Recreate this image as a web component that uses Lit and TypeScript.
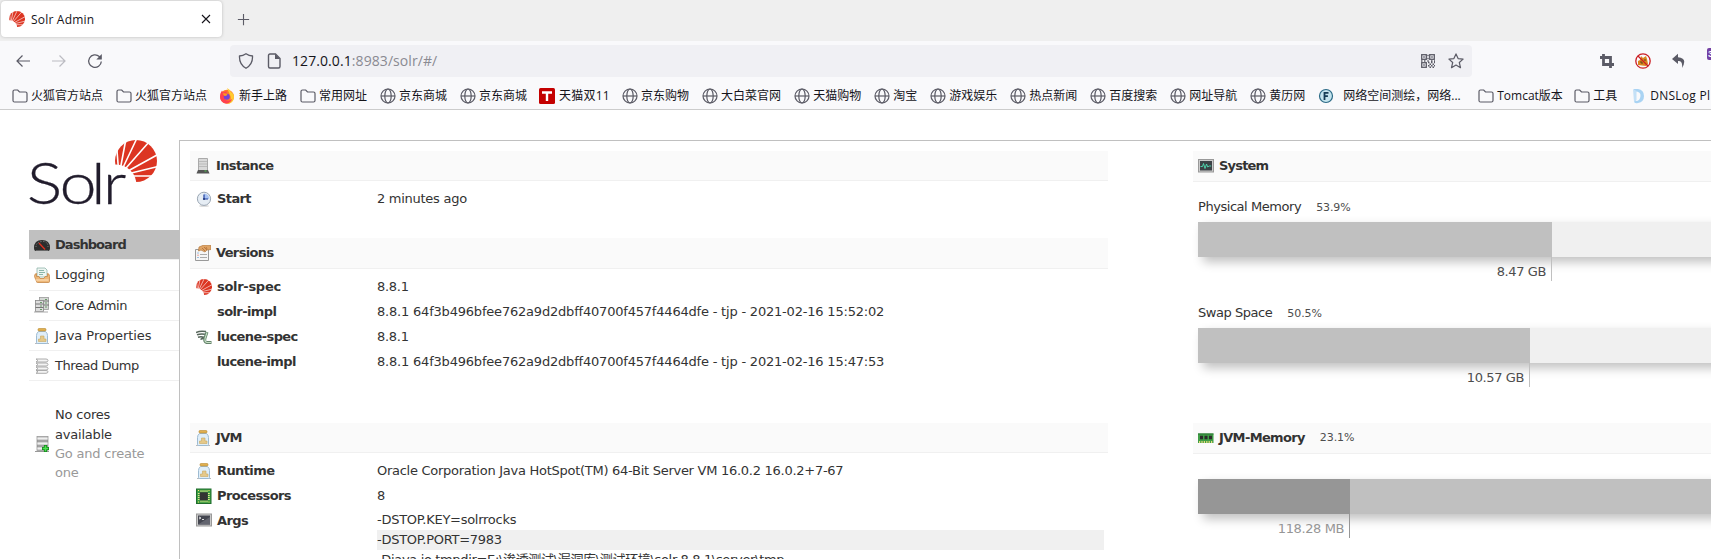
import { LitElement, html, css, svg, nothing } from "lit";
import { customElement, property } from "lit/decorators.js";

const fan = svg`
  <circle cx="21" cy="21" r="21" fill="#dc3522"/>
  <circle cx="1" cy="45" r="20.500" fill="#fff"/>
  <path d="M4 36 L1 -2 M4 36 L11.500 -4 M4 36 L22.500 -3 M4 36 L34 2 M4 36 L42 15 M4 36 L45 26 M4 36 L38 36" stroke="#fff" stroke-width="1.600"/>`;

const jar = svg`
  <path d="M1 15.500h14" stroke="#bbb"/>
  <path d="M4.500 3.500h7q2 1.500 2 4v7q0 1-1 1h-9q-1 0-1-1v-7q0-2.500 2-4z" fill="#dfeef9" stroke="#9dbbd2"/>
  <rect x="4" y="0.500" width="8" height="2.500" rx="1" fill="#e0b050" stroke="#b98a30" stroke-width=".6"/>
  <path d="M4.500 13.500v-2.500h2v-3h3.500v3h2v2.500z" fill="#e5c98a" stroke="#c9a860" stroke-width=".6"/>`;

const rack = svg`
  <rect x="3" y="0.500" width="11" height="14" fill="#c9c9c9" stroke="#999" stroke-width=".8"/>
  <path d="M3 5h11M3 10h11" stroke="#777" stroke-width=".9"/>
  <path d="M3.500 2.500h10M3.500 7.500h10M3.500 12.500h10" stroke="#efefef" stroke-width="1.500"/>
  <path d="M1 15.500h14" stroke="#999"/>`;

const icons: Record<string, unknown> = {
  fan: svg`<g transform="scale(.381)">${fan}</g>`,
  jar,
  folder: svg`<path d="M1 3.500q0-1.500 1.500-1.500h3.200l1.800 2h6q1.500 0 1.500 1.500v7q0 1.500-1.500 1.500h-11q-1.500 0-1.500-1.500z" fill="none" stroke="#5b5b66" stroke-width="1.200"/>`,
  globe: svg`<g fill="none" stroke="#5b5b66" stroke-width="1.200"><circle cx="8" cy="8" r="7"/><ellipse cx="8" cy="8" rx="3.200" ry="7"/><path d="M1 8h14"/></g>`,
  firefox: svg`<circle cx="8" cy="8.800" r="7" fill="#ff7a2b"/><path d="M8 0q3 1.500 4 4q3 1.500 3 5a7 7 0 0 1-7 7q6-4 3-9z" fill="#ffcb2e"/><path d="M1 8.500q0-3.500 2-6l1 2q2-1.500 4-1l-1 2 2 1-3 5q4 3 7.500-1-2 5-6.500 5-6-1-6-7z" fill="#ff4050"/><circle cx="7.800" cy="8.800" r="3" fill="#7542d8"/><path d="M3.500 5.500q3-1 5 1-1 1.500-3 1.500z" fill="#ff9a1e"/>`,
  tmall: svg`<rect width="16" height="16" rx="1.500" fill="#c40000"/><path d="M3 4.500h10M8 4.500v8.500" stroke="#fff" stroke-width="2.400"/>`,
  fofa: svg`<circle cx="8" cy="8" r="6.500" fill="#c4e4ee" stroke="#2b6a86" stroke-width="1.200"/><path d="M6.500 12V4.800h4M6.500 8.200h3.400" fill="none" stroke="#153c55" stroke-width="1.800"/>`,
  dns: svg`<path d="M3 1h4q6 1 6 7t-6 7q-4 1-4-2l1-3 1 3q4 0 4.500-5T3 3.500z" fill="#a9d3f3"/><path d="M2 1l3.500 2v9L3 14z" fill="#c4e0f6"/>`,
  dashboard: svg`<path d="M0 11q0-8 8-8t8 8q0 3-2 3H2q-2 0-2-3z" fill="#2d2d2d"/><path d="M2 10q0-5 6-5.500t6 5.500" fill="none" stroke="#888" stroke-dasharray="1 1.500"/><path d="M5 6l6 6.500" stroke="#e03020" stroke-width="1.300"/><path d="M2 13.500h12" stroke="#777" stroke-width=".8"/>`,
  logging: svg`<path d="M3 1h8l2 2v7H3z" fill="#eef6f2" stroke="#8fb5ab" stroke-width=".8"/><path d="M5 3.500h5M5 5.500h6M5 7.500h4" stroke="#7eafa2" stroke-width=".9"/><path d="M.5 9.500q0-3 2-3v3h2.500l1 2h4l1-2h2.500v-3q2 0 2 3v5q0 1-1 1h-11q-1 0-1-1z" fill="#eeb878" stroke="#c58747" stroke-width=".8"/><path d="M1.500 13h13" stroke="#ffe4c2"/>`,
  cores: svg`<rect x="5.500" y=".5" width="9" height="12" fill="#d4d8d4" stroke="#999" stroke-width=".8"/><path d="M5 4h10M5 8h10" stroke="#777"/><rect x="1.500" y="3.500" width="8" height="11" fill="#ddd" stroke="#888" stroke-width=".8"/><path d="M1.500 7h8M1.500 10.500h8" stroke="#777"/><path d="M6 5.500h2M6 9h2M6 12.500h2M11 2.500h2M11 6h2M11 10h2" stroke="#6a9a6a"/><path d="M0 15h14" stroke="#aaa"/>`,
  threads: svg`<g fill="#f4f4f4" stroke="#a4a4a4" stroke-width=".9"><path d="M2 1h10q2 0 2 1.500T12 4H2l2-1.500z"/><path d="M2 5h10q2 0 2 1.500T12 8H2l2-1.500z"/><path d="M2 9h10q2 0 2 1.500T12 12H2l2-1.500z"/><path d="M2 12.500h10q2 0 2 1.300t-2 1.500H2l2-1.500z"/></g>`,
  coreadd: svg`${rack}<path d="M11.500 9v7M8 12.500h7" stroke="#138a1c" stroke-width="3.200"/><path d="M11.500 9.800v5.400M8.800 12.500h5.400" stroke="#4fe052" stroke-width="1.500"/>`,
  server: svg`<path d="M3.500 .5h9v12h-9z" fill="#d9d9d9" stroke="#aaa"/><path d="M4 3.500h8M4 6h8M4 8.500h8" stroke="#b4b4b4" stroke-width=".8"/><path d="M3 12h10l1.500 3.500h-13z" fill="#555"/><path d="M9.500 13h2" stroke="#5c5"/>`,
  clock: svg`<ellipse cx="8" cy="15" rx="5" ry="1" fill="#ddd"/><circle cx="8" cy="7.800" r="6.600" fill="#e6edf4" stroke="#9aa6b3"/><path d="M8 8V2.500a5.500 5.500 0 0 1 5.300 5.500z" fill="#a9c3f3"/><path d="M8 3.500v4.500h4" fill="none" stroke="#2242a0" stroke-width="1.200"/><circle cx="8" cy="8" r="1.100" fill="#223a80"/>`,
  versions: svg`<path d="M.5 4.500h13v11H.5z" fill="#f5f5f5" stroke="#999"/><path d="M5 9.500h7M5 12.500h7" stroke="#aaa"/><path d="M2.500 8h1M2.500 12.500h1" stroke="#48c"/><path d="M2.500 10.200h1" stroke="#d54"/><path d="M4 2l5-2 7 .5v4l-4 .5-2 2-4-2-2.500 1z" fill="#dfa466" stroke="#b47a3f" stroke-width=".7"/><path d="M7 3l3 3M9 2l3 3M11 2l1 2" stroke="#a9662f" stroke-width=".7"/>`,
  lucene: svg`<path d="M0 3.500q4-2 10-1M1 5.800q4-1.500 8-.5M2 8.200q3-1 6 0M4.500 10.500q2-1.500 4-1" fill="none" stroke="#56655a" stroke-width="1.500"/><path d="M11 3l-2 6q-1 4 1.500 4.500h5" fill="none" stroke="#65846b" stroke-width="3"/><path d="M11 3.500l-2 6q-.5 3.500 2 4h4" fill="none" stroke="#c6dec5" stroke-width="1.100"/>`,
  cpu: svg`<rect x=".5" y="1" width="14.500" height="14.500" fill="#3a9e42" stroke="#1f6d2c"/><path d="M4.500 3.200h7M4.500 13.300h7M2.800 5v7M12.800 5v7" stroke="#e3e48c" stroke-width="1.800" stroke-dasharray="1 1"/><rect x="3.800" y="4.300" width="8" height="8" fill="#333"/><path d="M2 2.500h1M12.500 2.500h1M2 14h1M12.500 14h1" stroke="#ffe26b"/>`,
  terminal: svg`<rect x=".5" y="2" width="15" height="12" fill="#c9c9c9" stroke="#999"/><rect x="2" y="3.500" width="12" height="9" fill="#444650"/><path d="M3 5l2 1-2 1M6 7.500h2" fill="none" stroke="#eee" stroke-width=".9"/><path d="M2 12.500L14 5v7.500z" fill="#63656f"/>`,
  system: svg`<rect x=".5" y="1.500" width="15" height="12.500" fill="#ccc" stroke="#999"/><rect x="2" y="3" width="12" height="9.500" fill="#3c4246"/><path d="M2.500 8.500h2l1-3 1.500 5 1.500-4.500 1.200 3 1.500-1h2" fill="none" stroke="#4fe0b4" stroke-width=".9"/>`,
  ram: svg`<rect y="3.500" width="15.500" height="9.500" fill="#3f9e46"/><path d="M0 4h15.500" stroke="#2b7432"/><path d="M2 7.500h3M6.500 7.500h3M11 7.500h3" stroke="#2b2b2b" stroke-width="3.500"/><path d="M1 12h14" stroke="#e8dc7c" stroke-width="2" stroke-dasharray="1.200 1.200"/>`,
  back: svg`<path d="M7.500 2.500L2 8l5.500 5.500M2 8h13" fill="none" stroke="#5b5b66" stroke-width="1.200"/>`,
  forward: svg`<path d="M8.500 2.500L14 8l-5.500 5.500M14 8H1" fill="none" stroke="#bcbcc2" stroke-width="1.200"/>`,
  reload: svg`<path d="M14.300 8.500a6.300 6.300 0 1 1-2-5l1.500 1.500" fill="none" stroke="#5b5b66" stroke-width="1.300"/><path d="M14.800 1v5.500H9.300z" fill="#5b5b66"/>`,
  shield: svg`<path d="M8 .8q3 2 6.500 2.200Q15 11.500 8 15.300 1 11.500 1.500 3 5 2.800 8 .8z" fill="none" stroke="#5b5b66" stroke-width="1.300"/>`,
  page: svg`<path d="M2.500 2.500q0-1.500 1.500-1.500h5.500L14 5.500v8q0 1.500-1.500 1.500H4q-1.500 0-1.500-1.500z" fill="none" stroke="#5b5b66" stroke-width="1.400"/><path d="M9 1v5h5z" fill="#5b5b66"/>`,
  qr: svg`<g fill="none" stroke="#5b5b66" stroke-width="1.300"><rect x="1.700" y="1.700" width="4.600" height="4.600"/><rect x="9.700" y="1.700" width="4.600" height="4.600"/><rect x="1.700" y="9.700" width="4.600" height="4.600"/></g><path d="M3.300 4h1.400M11.300 4h1.400M3.300 12h1.400M7.300 8h1.400M1 8h1.500M4 8h1.500M11 8h1.500M14 8h1M8 9.600h1.500M11 9.600h1.500M14 9.600h1M9.500 11.200h1.500M12.500 11.200h1.500M8 12.800h1.500M11 12.800h1.500M14 12.800h1M9.500 14.300h1.500M12.500 14.300h1.500M7.300 2.500h1.400M7.300 5.500h1.400" stroke="#5b5b66" stroke-width="1.500"/>`,
  star: svg`<path d="M8 .9l2.100 4.700 5 .5-3.800 3.400 1.200 5.200L8 12l-4.500 2.700 1.200-5.200L.9 6.100l5-.5z" fill="none" stroke="#5b5b66" stroke-width="1.200" stroke-linejoin="round"/>`,
  crop: svg`<path d="M4.500 1v10.500H15M1 4.500h10.500V15" fill="none" stroke="#5b5b66" stroke-width="2.800"/>`,
  blocked: svg`<path d="M3 12V8l2-1 1-4 2 2 3-2 1 3 1 5-2 2z" fill="#d9861d"/><path d="M5 9h2v2M9 7h2" stroke="#5f4420" fill="none"/><circle cx="8" cy="8" r="7.200" fill="none" stroke="#cb1f24" stroke-width="1.300"/><path d="M3 3l10 10" stroke="#cb1f24" stroke-width="1.300"/>`,
  reply: svg`<path d="M7 .8L1 6l6 5V8q5-.5 4 7Q17 5 7 4.200z" fill="#5b5b66"/>`,
  close: svg`<path d="M4 4l8 8M12 4l-8 8" stroke="#15141a" stroke-width="1.100"/>`,
  plus: svg`<path d="M8 2v12M2 8h12" stroke="#5b5b66" stroke-width="1.200"/>`,
};

const icon = (name: string, size = 16) =>
  html`<svg width=${size} height=${size} viewBox="0 0 16 16">${icons[name] ?? nothing}</svg>`;

const base = css`
  :host { display: block; box-sizing: border-box; }
  * { box-sizing: border-box; }
  svg { display: block; flex: none; }
`;

@customElement("browser-chrome")
class BrowserChrome extends LitElement {
  static styles = [base, css`
    :host { font-family: "Open Sans", "Noto Sans CJK SC", sans-serif; font-size: 12px; letter-spacing: 0; color: #15141a; overflow: hidden; }
    .tabs { height: 41px; background: #efefef; display: flex; }
    .tab { width: 221px; height: 36px; margin: 1px 0 0 1px; padding: 0 8px; background: #fff; border-radius: 4px; box-shadow: 0 0 3px #8888; display: flex; align-items: center; gap: 6px; }
    .tab span { flex: 1; letter-spacing: .2px; }
    .new { margin: 12px 0 0 14px; }
    .nav { height: 41px; background: #f9f9fb; display: flex; align-items: center; padding: 0 0 1px 15px; }
    .buttons { display: flex; gap: 20px; width: 215px; flex: none; }
    .url { width: 1242px; height: 32px; flex: none; background: #f0f0f4; border-radius: 4px; display: flex; align-items: center; padding: 0 8px; }
    .url .page { margin: 0 10px 0 12px; }
    .address { flex: 1; font-size: 14px; letter-spacing: .08px; color: #8a8a92; margin-top: -2px; }
    .address b { font-weight: 400; color: #15141a; }
    .star { margin-left: 12px; }
    .tools { display: flex; gap: 20px; margin-left: 127px; align-items: center; flex: none; }
    .badge { width: 12px; height: 12px; margin-top: -14px; border-radius: 2px; background: #7440a4; color: #fff; font: bold 9px/12px "Liberation Sans", sans-serif; padding-left: 1px; flex: none; }
    .marks { height: 28px; background: #f9f9fb; border-bottom: 1px solid #ccc; display: flex; padding-left: 12px; white-space: nowrap; }
    .mark { display: flex; align-items: center; gap: 3px; margin-right: 13px; flex: none; }
    .mark span { line-height: 20px; }
    .firefox svg, .tmall svg { margin-left: -1px; margin-right: 1px; }
    .mixed { width: 50px; letter-spacing: .2px; }
    .wide { width: 119px; }
    .fofa { gap: 9px; margin-right: 16px; }
    .tomcat { width: 64px; }
    .dns { margin-left: 1px; }
    .dnslog { letter-spacing: .25px; }
  `];

  marks: [string, string, string?][] = [
    ["folder", "火狐官方站点"], ["folder", "火狐官方站点"], ["firefox", "新手上路"], ["folder", "常用网址"],
    ["globe", "京东商城"], ["globe", "京东商城"], ["tmall", "天猫双11", "mixed"], ["globe", "京东购物"],
    ["globe", "大白菜官网"], ["globe", "天猫购物"], ["globe", "淘宝"], ["globe", "游戏娱乐"], ["globe", "热点新闻"],
    ["globe", "百度搜索"], ["globe", "网址导航"], ["globe", "黄历网"], ["fofa", "网络空间测绘，网络...", "wide"],
    ["folder", "Tomcat版本", "tomcat"], ["folder", "工具"], ["dns", "DNSLog Pl", "dnslog"],
  ];

  render() {
    return html`
      <div class="tabs">
        <div class="tab">${icon("fan")}<span>Solr Admin</span>${icon("close")}</div>
        <div class="new">${icon("plus", 15)}</div>
      </div>
      <div class="nav">
        <div class="buttons">${icon("back")}${icon("forward")}${icon("reload")}</div>
        <div class="url">${icon("shield")}<div class="page">${icon("page")}</div>
          <div class="address"><b>127.0.0.1</b>:8983/solr/#/</div>${icon("qr")}<div class="star">${icon("star")}</div></div>
        <div class="tools">${icon("crop")}${icon("blocked")}${icon("reply")}<div class="badge">3</div></div>
      </div>
      <div class="marks">
        ${this.marks.map(([i, t, c]) => html`<div class="mark ${i}">${icon(i)}<span class=${c ?? ""}>${t}</span></div>`)}
      </div>`;
  }
}

@customElement("solr-sidebar")
class SolrSidebar extends LitElement {
  static styles = [base, css`
    :host { width: 150px; flex: none; }
    .logo { margin-bottom: 25px; overflow: visible; }
    .wordmark { font-family: Lato, sans-serif; font-weight: 300; font-size: 57px; letter-spacing: 0; fill: #211c2c; stroke: #211c2c; stroke-width: .3px; }
    .item { height: 30.3px; padding: 0 5px; border-bottom: 1px solid #f0f0f0; display: flex; align-items: center; gap: 5px; white-space: nowrap; }
    .active { background: #c0c0c0; font-weight: bold; letter-spacing: -.95px; }
    .jar { letter-spacing: -.05px; }
    .cores { letter-spacing: -.35px; }
    .threads { letter-spacing: -.45px; }
    .empty { display: flex; align-items: center; gap: 5px; margin: 24px 0 0 5px; line-height: 19.3px; letter-spacing: -.2px; }
    .muted { color: #999; }
  `];
  items = [["dashboard", "Dashboard"], ["logging", "Logging"], ["cores", "Core Admin"], ["jar", "Java Properties"], ["threads", "Thread Dump"]];
  render() {
    return html`
      <svg class="logo" width="130" height="65" viewBox="0 0 130 65">
        <g transform="translate(86 0)">${fan}</g>
        <text class="wordmark" transform="scale(1.17 1)" x="-2 26 53 63" y="64">Solr</text>
      </svg>
      ${this.items.map(([i, t], n) => html`<div class="item ${i} ${n === 0 ? "active" : ""}">${icon(i)}<span>${t}</span></div>`)}
      <div class="empty">${icon("coreadd")}<div>No cores<br>available<div class="muted">Go and create<br>one</div></div></div>`;
  }
}

@customElement("memory-bar")
class MemoryBar extends LitElement {
  @property({ type: Number }) fill = 0;
  @property() value = "";
  @property({ type: Boolean, reflect: true }) dark = false;
  static styles = [base, css`
    :host { height: 60px; }
    .track { width: 603px; height: 35px; background: #f0f0f0; box-shadow: 5px 5px 10px #c0c0c0; }
    .used { height: 59px; border-right: 1px solid #c0c0c0; padding-right: 5px; display: flex; flex-direction: column; color: #4d4d4d; text-align: right; }
    .used::before { content: ""; height: 35px; flex: none; margin-right: -6px; background: #c0c0c0; }
    .label { line-height: 20px; padding-top: 5px; white-space: nowrap; letter-spacing: -.4px; }
    :host([dark]) .track { background: #c0c0c0; }
    :host([dark]) .used { border-color: #969696; color: #969696; }
    :host([dark]) .used::before { background: #969696; }
  `];
  render() {
    return html`<div class="track"><div class="used" style="width:${this.fill}px"><span class="label">${this.value}</span></div></div>`;
  }
}

@customElement("app-root")
class AppRoot extends LitElement {
  static styles = [base, css`
    :host { width: 100%; height: 559px; overflow: hidden; background: #fff; color: #333; font-family: "DejaVu Sans", "Noto Sans CJK SC", sans-serif; font-size: 13px; letter-spacing: -.27px; }
    .page { display: flex; padding: 30px 0 0 29px; }
    .main { width: 1700px; height: 440px; flex: none; border: solid #c0c0c0; border-width: 1px 0 0 1px; padding: 10px; display: grid; grid-template-columns: 918px 620px; column-gap: 85px; align-items: start; }
    .head { height: 30px; background: #fafafa; border-bottom: 1px solid #f0f0f0; display: flex; align-items: center; gap: 5px; padding-left: 5px; font-weight: bold; letter-spacing: -.65px; }
    .tall { height: 31px; padding-bottom: 1px; }
    .row { display: grid; grid-template-columns: 16px 155px 727px; column-gap: 5px; padding-left: 6px; line-height: 25px; align-items: center; }
    .row b { letter-spacing: -.6px; }
    .row.fan b { letter-spacing: -.3px; }
    .row.impl { letter-spacing: -.2px; }
    .rows { padding-top: 5px; }
    .instance { height: 87px; }
    .versions { height: 185px; }
    .args { align-items: start; }
    .args svg { margin-top: 4px; }
    .arg { line-height: 20px; height: 20px; white-space: nowrap; }
    .arg:last-child { letter-spacing: -.33px; }
    .args .list { padding-top: 2px; }
    .shade { background: #f0f0f0; }
    .pct { font-size: 11px; font-weight: normal; color: #4d4d4d; margin-left: 10px; letter-spacing: -.1px; }
    .title { display: flex; align-items: baseline; height: 20px; line-height: 20px; margin-bottom: 5px; letter-spacing: -.45px; }
    .title .pct { margin-left: 15px; }
    .system { height: 272px; }
    .system .head { letter-spacing: -.8px; }
    .meters { padding: 15px 0 0 5px; display: grid; row-gap: 21px; }
    .jvm { padding: 25px 0 0 5px; }
  `];

  row(i: string, label: string, value: string) {
    return html`<div class="row ${i || "impl"}">${icon(i)}<b>${label}</b><span>${value}</span></div>`;
  }

  render() {
    return html`
      <browser-chrome></browser-chrome>
      <div class="page">
        <solr-sidebar></solr-sidebar>
        <div class="main">
          <div class="left">
            <div class="instance">
              <div class="head">${icon("server")}Instance</div>
              <div class="rows">${this.row("clock", "Start", "2 minutes ago")}</div>
            </div>
            <div class="versions">
              <div class="head tall">${icon("versions")}Versions</div>
              <div class="rows">
                ${this.row("fan", "solr-spec", "8.8.1")}
                ${this.row("", "solr-impl", "8.8.1 64f3b496bfee762a9d2dbff40700f457f4464dfe - tjp - 2021-02-16 15:52:02")}
                ${this.row("lucene", "lucene-spec", "8.8.1")}
                ${this.row("", "lucene-impl", "8.8.1 64f3b496bfee762a9d2dbff40700f457f4464dfe - tjp - 2021-02-16 15:47:53")}
              </div>
            </div>
            <div class="head">${icon("jar")}JVM</div>
            <div class="rows">
              ${this.row("jar", "Runtime", "Oracle Corporation Java HotSpot(TM) 64-Bit Server VM 16.0.2 16.0.2+7-67")}
              ${this.row("cpu", "Processors", "8")}
              <div class="row args">${icon("terminal")}<b>Args</b>
                <div class="list">
                  <div class="arg">-DSTOP.KEY=solrrocks</div>
                  <div class="arg shade">-DSTOP.PORT=7983</div>
                  <div class="arg">-Djava.io.tmpdir=E:\\渗透测试\\漏洞库\\测试环境\\solr-8.8.1\\server\\tmp</div>
                </div>
              </div>
            </div>
          </div>
          <div class="right">
            <div class="system">
              <div class="head tall">${icon("system")}System</div>
              <div class="meters">
                <div><div class="title">Physical Memory<span class="pct">53.9%</span></div><memory-bar .fill=${354} value="8.47 GB"></memory-bar></div>
                <div><div class="title">Swap Space<span class="pct">50.5%</span></div><memory-bar .fill=${332} value="10.57 GB"></memory-bar></div>
              </div>
            </div>
            <div class="head tall">${icon("ram")}JVM-Memory <span class="pct">23.1%</span></div>
            <div class="jvm"><memory-bar dark .fill=${152} value="118.28 MB"></memory-bar></div>
          </div>
        </div>
      </div>`;
  }
}
